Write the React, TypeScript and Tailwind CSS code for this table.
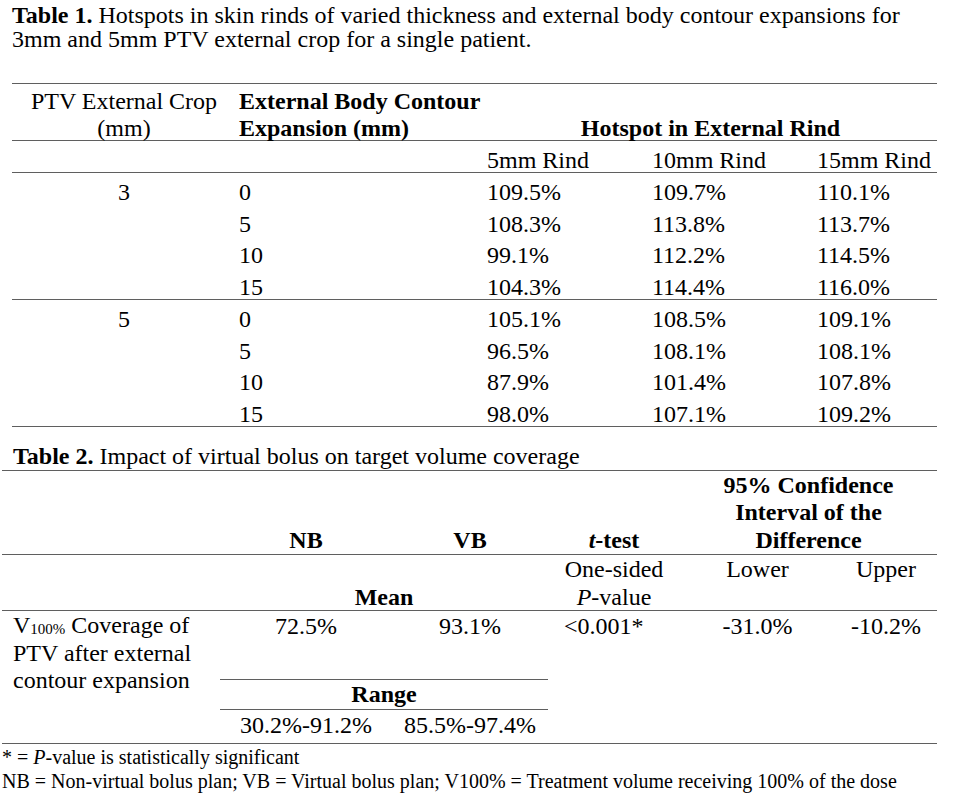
const line = 'border-[#5f5f5f]';

function Row1({ ext, vals, crop }: { ext: string; vals: string[]; crop?: string }) {
  return (
    <div className="flex h-[31.5px] pt-[6px] leading-[26px]">
      <div className="w-[224px] text-center">{crop}</div>
      <div className="w-[248px] pl-[3px]">{ext}</div>
      <div className="w-[165px] pl-[3px]">{vals[0]}</div>
      <div className="w-[165px] pl-[3px]">{vals[1]}</div>
      <div className="flex-1 pl-[3px]">{vals[2]}</div>
    </div>
  );
}

const group3 = [
  ['0', '109.5%', '109.7%', '110.1%'],
  ['5', '108.3%', '113.8%', '113.7%'],
  ['10', '99.1%', '112.2%', '114.5%'],
  ['15', '104.3%', '114.4%', '116.0%'],
];

const group5 = [
  ['0', '105.1%', '108.5%', '109.1%'],
  ['5', '96.5%', '108.1%', '108.1%'],
  ['10', '87.9%', '101.4%', '107.8%'],
  ['15', '98.0%', '107.1%', '109.2%'],
];

export default function App() {
  return (
    <div className="w-[957px] h-[808px] bg-white text-black font-['Liberation_Serif','Times_New_Roman',serif] text-[24px]">
      {/* table 1 caption */}
      <div className="pl-[12px] pt-[3px] leading-[24px] whitespace-nowrap">
        <b>Table 1.</b> Hotspots in skin rinds of varied thickness and external body contour expansions for
        <br />
        3mm and 5mm PTV external crop for a single patient.
      </div>

      <div className={`ml-[12px] mt-[32px] w-[925px] border-t ${line}`}>
        <div className={`flex h-[57px] pt-[4px] leading-[27px] border-b ${line}`}>
          <div className="w-[224px] text-center">
            PTV External Crop
            <br />
            (mm)
          </div>
          <div className="w-[248px] pl-[3px] font-bold">
            External Body Contour
            <br />
            Expansion (mm)
          </div>
          <div className="flex-1 pt-[27px] text-center font-bold">Hotspot in External Rind</div>
        </div>

        <div className={`flex h-[32px] pt-[6px] leading-[26px] border-b ${line}`}>
          <div className="w-[224px]" />
          <div className="w-[248px]" />
          <div className="w-[165px] pl-[3px]">5mm Rind</div>
          <div className="w-[165px] pl-[3px]">10mm Rind</div>
          <div className="flex-1 pl-[3px]">15mm Rind</div>
        </div>

        <div className={`border-b ${line}`}>
          {group3.map((r, i) => (
            <Row1 key={r[0]} crop={i === 0 ? '3' : undefined} ext={r[0]} vals={r.slice(1)} />
          ))}
        </div>
        <div className={`border-b ${line}`}>
          {group5.map((r, i) => (
            <Row1 key={r[0]} crop={i === 0 ? '5' : undefined} ext={r[0]} vals={r.slice(1)} />
          ))}
        </div>
      </div>

      {/* table 2 caption */}
      <div className="pl-[13px] mt-[16px] leading-[27px] whitespace-nowrap">
        <b>Table 2.</b> Impact of virtual bolus on target volume coverage
      </div>

      <div className={`ml-[2px] w-[935px] border-t ${line} leading-[27.5px]`}>
        {/* header */}
        <div className={`flex h-[84px] items-end border-b ${line} font-bold`}>
          <div className="w-[218px]" />
          <div className="w-[172px] text-center">NB</div>
          <div className="w-[156px] text-center">VB</div>
          <div className="w-[132px] text-center">
            <i>t</i>-test
          </div>
          <div className="flex-1 text-center">
            95% Confidence
            <br />
            Interval of the
            <br />
            Difference
          </div>
        </div>

        <div className={`flex h-[56px] pt-[1px] border-b ${line}`}>
          <div className="w-[218px]" />
          <div className="w-[328px] pt-[27.5px] text-center font-bold">Mean</div>
          <div className="w-[132px] text-center">
            One-sided
            <br />
            <i>P</i>-value
          </div>
          <div className="w-[155px] text-center">Lower</div>
          <div className="flex-1 text-center">Upper</div>
        </div>

        <div className={`flex h-[133px] border-b ${line}`}>
          <div className="w-[218px] pl-[11px] pt-[1px]">
            V<sub className="text-[15px] bottom-[-1px]">100%</sub> Coverage of
            <br />
            PTV after external
            <br />
            contour expansion
          </div>
          <div className="w-[328px] flex flex-col">
            <div className="flex h-[68px] pt-[2px]">
              <div className="w-[172px] text-center">72.5%</div>
              <div className="flex-1 text-center">93.1%</div>
            </div>
            <div className={`h-[31px] pt-[1px] border-y ${line} text-center font-bold`}>Range</div>
            <div className="flex pt-[2px]">
              <div className="w-[172px] text-center">30.2%-91.2%</div>
              <div className="flex-1 text-center">85.5%-97.4%</div>
            </div>
          </div>
          <div className="w-[132px] pl-[16px] pt-[2px]">&lt;0.001*</div>
          <div className="w-[155px] pt-[2px] text-center">-31.0%</div>
          <div className="flex-1 pt-[2px] text-center">-10.2%</div>
        </div>
      </div>

      {/* footnotes */}
      <div className="pl-[2px] pt-[1px] text-[20px] leading-[24px] whitespace-nowrap">
        <div>
          * = <i>P</i>-value is statistically significant
        </div>
        <div>NB = Non-virtual bolus plan; VB = Virtual bolus plan; V100% = Treatment volume receiving 100% of the dose</div>
      </div>
    </div>
  );
}
